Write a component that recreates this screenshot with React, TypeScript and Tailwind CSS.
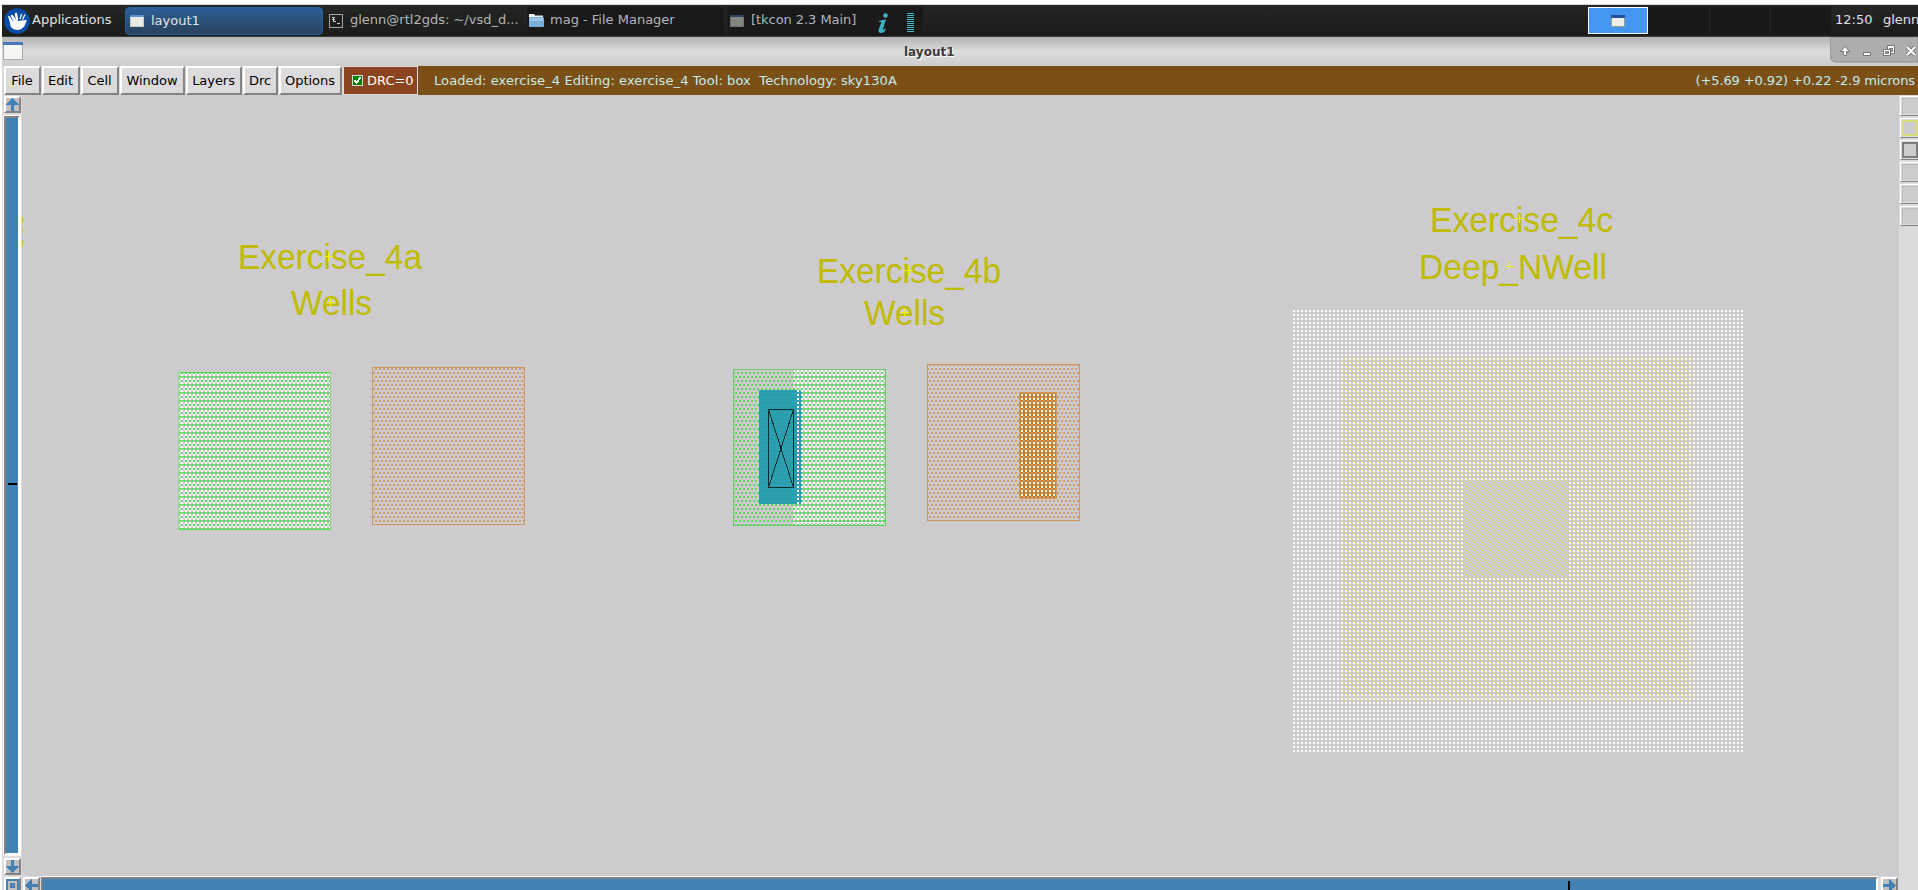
import type { ReactNode } from "react";

const bevel =
  "border-2 border-t-white border-l-white border-r-[#858285] border-b-[#858285]";

function WindowIcon({ dim = false }: { dim?: boolean }) {
  return (
    <svg width="14" height="12" shapeRendering="crispEdges" className="shrink-0">
      <rect width="14" height="12" fill={dim ? "#6f7275" : "#c9c9c6"} />
      <rect width="14" height="2" fill={dim ? "#2c4468" : "#5b8fd6"} />
      <rect x="1" y="2" width="12" height="9" fill={dim ? "#85857f" : "#ecece6"} />
    </svg>
  );
}

function Task({ icon, label, className }: { icon: ReactNode; label?: string; className: string }) {
  return (
    <div className={`flex h-7 items-center overflow-hidden whitespace-nowrap text-[#b5b5b5] ${className}`}>
      {icon}
      <span className="-mt-px">{label}</span>
    </div>
  );
}

function Taskbar() {
  return (
    <header className="flex h-8 shrink-0 items-center overflow-hidden border-b border-[#3a3a3a] bg-gradient-to-b from-[#242623] to-[#1b1c1b] text-[13px] text-[#e2e2e2]">
      <div className="flex w-[123px] items-center gap-0.5 pl-0.5">
        <svg width="26" height="26" viewBox="0 0 26 26">
          <circle cx="13" cy="13" r="12.8" fill="#0a4da8" />
          <path
            d="M4 8 Q5 7 6 9 L9 13 Q11 11 14 13 L21 12 Q24 12 22 14 Q20 22 13 22 Q6 21 6 15 Z"
            fill="#fff"
          />
          <path d="M8 8l2.5 4M12 6l1 5.500" stroke="#fff" strokeWidth="2.400" strokeLinecap="round" />
          <path d="M17.500 6l-1.500 5M21 6.500l-2.500 5" stroke="#fff" strokeWidth="1.300" />
        </svg>
        <span className="-mt-px">Applications</span>
      </div>
      <div className="flex h-7 w-[198px] items-center gap-[7px] rounded-sm border border-[#245fa5] bg-gradient-to-b from-[#2b5f98] to-[#2a425c] pl-1 pt-px">
        <WindowIcon />
        <span>layout1</span>
      </div>
      <Task
        className="ml-1 w-[197px] gap-[7px] pl-0.5"
        label="glenn@rtl2gds: ~/vsd_d..."
        icon={
          <svg width="14" height="14" shapeRendering="crispEdges" className="shrink-0">
            <rect x="0.500" y="0.500" width="13" height="13" fill="#202020" stroke="#a3a3a0" />
            <path d="M3 3.500h3M3 5.500h3M3.500 7.500h3M4.500 3v5M8 9.500h3" stroke="#d0d0d0" />
          </svg>
        }
      />
      <Task
        className="ml-0.5 w-[198px] gap-1.5 border-l border-[#242424] bg-[#191919] pl-0.5"
        label="mag - File Manager"
        icon={
          <svg width="15" height="13" className="shrink-0">
            <path d="M0 0h5l1 1.500h8V4H0z" fill="#ecf3f8" />
            <rect y="3" width="15" height="10" rx="1" fill="#78aedb" />
            <rect x="1" y="4" width="13" height="3" fill="#9cc6e8" />
          </svg>
        }
      />
      <div className="ml-0.5 flex h-7 w-[197px] items-center border-l border-[#242424] bg-[#191919] pl-[3px]">
        <Task
          className="w-[147px] gap-[7px] tracking-[-0.05px]"
          label="[tkcon 2.3 Main]"
          icon={<WindowIcon dim />}
        />
        <svg width="12" height="22" viewBox="0 0 12 22" className="mt-1">
          <circle cx="8.500" cy="3.500" r="2.300" fill="#3db2c2" />
          <path d="M2 9q5-2 7-1.500L6 17q0 2 3-1-1 5-5 5-3 0-2.500-3L4.500 10H2z" fill="#3db2c2" />
        </svg>
        <svg width="7" height="20" className="ml-[18px] mt-1" shapeRendering="crispEdges">
          {[0, 2, 4, 6, 8, 10, 12, 14, 16, 18].map((y) => (
            <rect key={y} y={y} width="7" height="1" fill="#4bb8c6" />
          ))}
        </svg>
      </div>
      <div className="ml-auto flex h-[27px] shrink-0">
        <div className="flex w-[60px] items-center justify-center border border-white bg-[#4397f1]">
          <svg width="14" height="12" shapeRendering="crispEdges">
            <rect width="14" height="12" fill="#9a9a92" />
            <rect width="14" height="3" fill="#214f91" />
            <rect x="1" y="3" width="12" height="8" fill="#ecece8" />
          </svg>
        </div>
        <div className="w-[61px] bg-[#171817]" />
        <div className="w-[61px] border-l border-[#252525] bg-[#171817]" />
        <div className="w-[61px] border-l border-[#252525] bg-[#171817]" />
      </div>
      <span className="-mt-px w-[52px] shrink-0 pl-1">12:50</span>
      <span className="-mt-px w-[35px] shrink-0 overflow-hidden whitespace-nowrap">glenn</span>
    </header>
  );
}

function TitleBar() {
  return (
    <div className="flex h-[29px] shrink-0 bg-gradient-to-b from-[#b4b4b4] via-[#dcdcdc] to-[#cdcdcd]">
      <div className="flex flex-1 items-start">
        <svg width="20" height="18" className="ml-px mt-[5px]" shapeRendering="crispEdges">
          <rect width="20" height="18" fill="#a9a9a9" />
          <rect width="20" height="3" fill="#4a76bb" />
          <rect x="1" y="3" width="18" height="14" fill="#f5f7f2" />
        </svg>
        <span className="ml-[881px] mt-[6px] text-[12px] font-bold leading-[18px] text-[#3a3a3a] [text-shadow:1px_1px_0_#fff]">
          layout1
        </span>
      </div>
      <svg width="88" height="26">
        <path d="M0 0H88V25H5Q0 24 0 18Z" fill="#adadad" stroke="#8c8c8c" />
        <g stroke="#747474" strokeWidth="1" fill="#fff">
          <path d="M15 9.500l4.500 5h-3v4h-3v-4h-3z" />
          <rect x="33.500" y="15.500" width="7" height="3" />
          <path d="M57.500 8.500h7v8h-7z" />
          <path d="M59.500 11.500h3v3h-3z" fill="#adadad" />
          <path d="M53.500 12.500h7v6h-7z" />
          <path d="M55.500 14.500h3v2h-3z" fill="#adadad" />
        </g>
        <path d="M77 10l8 8M85 10l-8 8" stroke="#747474" strokeWidth="4" />
        <path d="M77 10l8 8M85 10l-8 8" stroke="#fff" strokeWidth="2.200" />
      </svg>
    </div>
  );
}

const menus = [
  ["File", "w-[37px]"],
  ["Edit", "w-[38px]"],
  ["Cell", "w-[38px]"],
  ["Window", "w-[65px]"],
  ["Layers", "w-[56px]"],
  ["Drc", "w-[35px]"],
  ["Options", "w-[63px]"],
];

function MenuBar() {
  return (
    <nav className="flex h-[29px] shrink-0 bg-[#7a5018] text-[13px] text-black">
      <div className="flex gap-px bg-[#dcdadc] pl-0.5 pr-px">
        {menus.map(([name, width]) => (
          <button
            key={name}
            className={`flex items-center justify-center border-2 border-b-[#858285] border-l-white border-r-[#858285] border-t-white bg-[#dcdadd] pr-px tracking-[-0.05px] ${width}`}
          >
            {name}
          </button>
        ))}
      </div>
      <div className="flex w-[75px] items-center gap-1 whitespace-nowrap border border-[#dcdadc] bg-[#8a4420] pl-2 text-white">
        <svg width="11" height="11" shapeRendering="crispEdges">
          <rect width="11" height="11" fill="#ddd" />
          <rect x="1" y="1" width="9" height="9" fill="#008000" />
          <path d="M2.500 5l2 2.500 4-5" fill="none" stroke="#fff" strokeWidth="2" />
        </svg>
        <span>DRC=0</span>
      </div>
      <div className="flex flex-1 items-center justify-between whitespace-pre pl-4 pr-[3px] text-[#c8ebe8]">
        <span className="tracking-[0.1px]">
          Loaded: exercise_4 Editing: exercise_4 Tool: box  Technology: sky130A
        </span>
        <span className="tracking-[-0.11px]">(+5.69 +0.92) +0.22 -2.9 microns</span>
      </div>
    </nav>
  );
}

function ArrowButton({ turn = "" }: { turn?: string }) {
  return (
    <div className={`h-[17px] w-[17px] shrink-0 bg-[#bfbfbf] ${bevel}`}>
      <svg width="13" height="13" viewBox="0 0 13 13" className={turn} shapeRendering="crispEdges">
        <path d="M6.500 0L13 7H8v6H5V7H0z" fill="#4381b5" />
      </svg>
    </div>
  );
}

function Stipple({ id, color }: { id: string; color: string }) {
  return (
    <pattern id={id} width="4" height="8" patternUnits="userSpaceOnUse">
      <rect x="1" y="4" width="2" height="2" fill={color} />
      <rect x="3" y="0" width="1" height="2" fill={color} />
      <rect x="0" y="0" width="1" height="2" fill={color} />
    </pattern>
  );
}

const labels: [string, number, number, number, number, number][] = [
  ["Exercise_4a", 238, 269, 184, 328, 257],
  ["Wells", 291, 315, 81, 330, 303],
  ["Exercise_4b", 817, 283, 184, 908, 271],
  ["Wells", 864, 325, 81, 904, 313],
  ["Exercise_4c", 1430, 232, 183, 1519, 219],
  ["Deep_NWell", 1419, 279, 188, 1509, 267],
];

function LayoutCanvas() {
  return (
    <svg
      width="1877"
      height="781"
      viewBox="22 95 1877 781"
      shapeRendering="crispEdges"
      className="block shrink-0 bg-[#cdcbcd]"
    >
      <defs>
        <Stipple id="green" color="#5cd65c" />
        <Stipple id="orange" color="#cf9d6b" />
        <Stipple id="blue" color="#3c9bbd" />
        <pattern id="white" width="4" height="4" patternUnits="userSpaceOnUse">
          <rect x="1" y="2" width="2" height="2" fill="#fff" />
        </pattern>
        <pattern id="nwell" width="4" height="8" patternUnits="userSpaceOnUse">
          <rect x="1" y="0" width="2" height="8" fill="#fff" />
          <rect x="1" y="0" width="2" height="2" fill="#a3cfa3" />
          <rect x="0" y="4" width="4" height="2" fill="#e8ece8" />
          <rect x="1" y="4" width="2" height="2" fill="#5cd65c" />
          <rect x="0" y="0" width="1" height="2" fill="#5cd65c" />
          <rect x="3" y="0" width="1" height="2" fill="#5cd65c" />
        </pattern>
        <pattern id="diagonal" width="8" height="8" patternUnits="userSpaceOnUse">
          {[0, 1, 2, 3, 4, 5, 6, 7].map((y) => (
            <rect key={y} x={(y + 4) % 8} y={y} width="1" height="1" fill="#e4e04c" />
          ))}
        </pattern>
        <pattern id="diagonalDots" width="8" height="8" patternUnits="userSpaceOnUse">
          {[0, 1, 2, 3, 4, 5, 6, 7].map((y) => (
            <rect
              key={y}
              x={(y + 4) % 8}
              y={y}
              width="1"
              height="1"
              fill={y % 4 === 2 ? "#f2ee50" : "#dedb70"}
            />
          ))}
        </pattern>
      </defs>

      <path d="M22.500 217v6M22.500 229v4M22.500 240v6" stroke="#c8c040" />

      <rect x="178" y="372" width="153" height="158" fill="url(#nwell)" />
      <path d="M178 372.500h153M178 529.500h153" stroke="#4fdc4f" />
      <path d="M178.500 372v158M330.500 372v158" stroke="#7be57b" />

      <rect x="372" y="367" width="153" height="158" fill="url(#orange)" />
      <rect x="372.500" y="367.500" width="152" height="157" fill="none" stroke="#cc9558" />

      <rect x="733" y="369" width="61" height="157" fill="url(#green)" />
      <rect x="794" y="369" width="92" height="157" fill="url(#nwell)" />
      <rect x="733.500" y="369.500" width="152" height="156" fill="none" stroke="#62cf62" />
      <rect x="759" y="390" width="43" height="114" fill="#26a0a8" />
      <rect x="759" y="390" width="43" height="114" fill="url(#blue)" />
      <rect x="795" y="390" width="7" height="114" fill="url(#white)" />
      <g fill="none" stroke="#0b2c30">
        <rect x="768.500" y="409.500" width="25" height="78" />
        <path d="M768.500 409.500l25 78M793.500 409.500l-25 78" />
      </g>

      <rect x="927" y="364" width="153" height="157" fill="url(#orange)" />
      <rect x="927.500" y="364.500" width="152" height="156" fill="none" stroke="#cf9556" />
      <rect x="1019" y="392" width="38" height="107" fill="#cf9556" />
      <rect x="1020" y="393" width="36" height="105" fill="#cc7820" />
      <rect x="1020" y="393" width="36" height="105" fill="url(#orange)" />
      <rect x="1020" y="393" width="36" height="105" fill="url(#white)" />

      <path d="M1293 310h450v442h-450zM1463 480v98h106v-98z" fillRule="evenodd" fill="url(#white)" />
      <path
        d="M1340 356h353v346h-353zM1463 480v98h106v-98z"
        fillRule="evenodd"
        fill="url(#diagonalDots)"
      />
      <rect x="1463" y="480" width="106" height="98" fill="url(#diagonal)" />

      {labels.map(([text, x, y, width, cx, cy]) => (
        <g key={`${text}-${x}`}>
          <text
            x={x}
            y={y}
            textLength={width}
            lengthAdjust="spacingAndGlyphs"
            fill="#bfbb00"
            fontSize="34.5"
            fontFamily="'Liberation Sans', sans-serif"
          >
            {text}
          </text>
          <path d={`M${cx - 4} ${cy - 0.5}h9M${cx + 0.5} ${cy - 5}v9`} stroke="#f4f000" />
        </g>
      ))}
    </svg>
  );
}

function Palette() {
  const box = "h-5 w-[18px] border-b border-l border-t border-b-[#858285] border-l-white border-t-white p-px pr-0";
  return (
    <aside className="flex w-[19px] shrink-0 flex-col items-end gap-0.5 bg-[#dcdadc] pt-px">
      <div className={box}><div className="h-full border-l border-t border-[#bdbbbd] bg-[#cdcbcd]" /></div>
      <div className={box}><div className="h-full border-2 border-[#dcdc78] bg-[#cdcbcd]" /></div>
      <div className={box}><div className="h-full border-2 border-[#7e7d80] bg-[#cdcbcd]" /></div>
      <div className={box}><div className="h-full border-l border-t border-[#bdbbbd] bg-[#cdcbcd]" /></div>
      <div className={box}><div className="h-full border-l border-t border-[#bdbbbd] bg-[#cdcbcd]" /></div>
      <div className={box}><div className="h-full border-l border-t border-[#bdbbbd] bg-[#cdcbcd]" /></div>
    </aside>
  );
}

export default function App() {
  return (
    <div className="flex h-[890px] w-[1918px] flex-col overflow-hidden bg-white pl-0.5 pt-[4px] font-['DejaVu_Sans',sans-serif]">
      <div className="h-px shrink-0 bg-[#d8d8d8]" />
      <Taskbar />
      <TitleBar />
      <MenuBar />
      <main className="flex min-h-0 flex-1 bg-[#dcdadc]">
        <div className="flex w-[1897px] shrink-0 flex-col">
          <div className="flex h-[781px] shrink-0">
            <div className="flex w-5 shrink-0 flex-col items-center gap-0.5 pb-px pt-px">
              <ArrowButton />
              <div className="flex w-[18px] flex-1 flex-col border border-white">
                <div className="flex flex-1 items-center justify-center border-2 border-b-white border-l-[#858285] border-r-white border-t-[#858285] bg-[#4381b5]">
                  <div className="mt-[-4px] h-0.5 w-[9px] bg-black" />
                </div>
              </div>
              <ArrowButton turn="rotate-180" />
            </div>
            <LayoutCanvas />
          </div>
          <div className="flex h-[19px] shrink-0 pl-0.5 pt-px">
            <div className={`h-[17px] w-[17px] bg-[#bfbfbf] ${bevel}`}>
              <svg width="13" height="13" shapeRendering="crispEdges" fill="none" stroke="#4381b5" strokeWidth="2">
                <rect x="1" y="1" width="11" height="11" />
                <rect x="5" y="5" width="3" height="3" />
              </svg>
            </div>
            <div className="ml-0.5">
              <ArrowButton turn="-rotate-90" />
            </div>
            <div className="-mt-px ml-px flex h-[19px] flex-1 border-t border-white">
              <div className="flex-1 border-2 border-l-[#858285] border-r-white border-t-[#858285] bg-[#4381b5]">
                <div className="ml-[1525px] mt-0.5 h-4 w-0.5 bg-black" />
              </div>
            </div>
            <div className="ml-[3px] mr-px">
              <ArrowButton turn="rotate-90" />
            </div>
          </div>
        </div>
        <Palette />
      </main>
    </div>
  );
}
